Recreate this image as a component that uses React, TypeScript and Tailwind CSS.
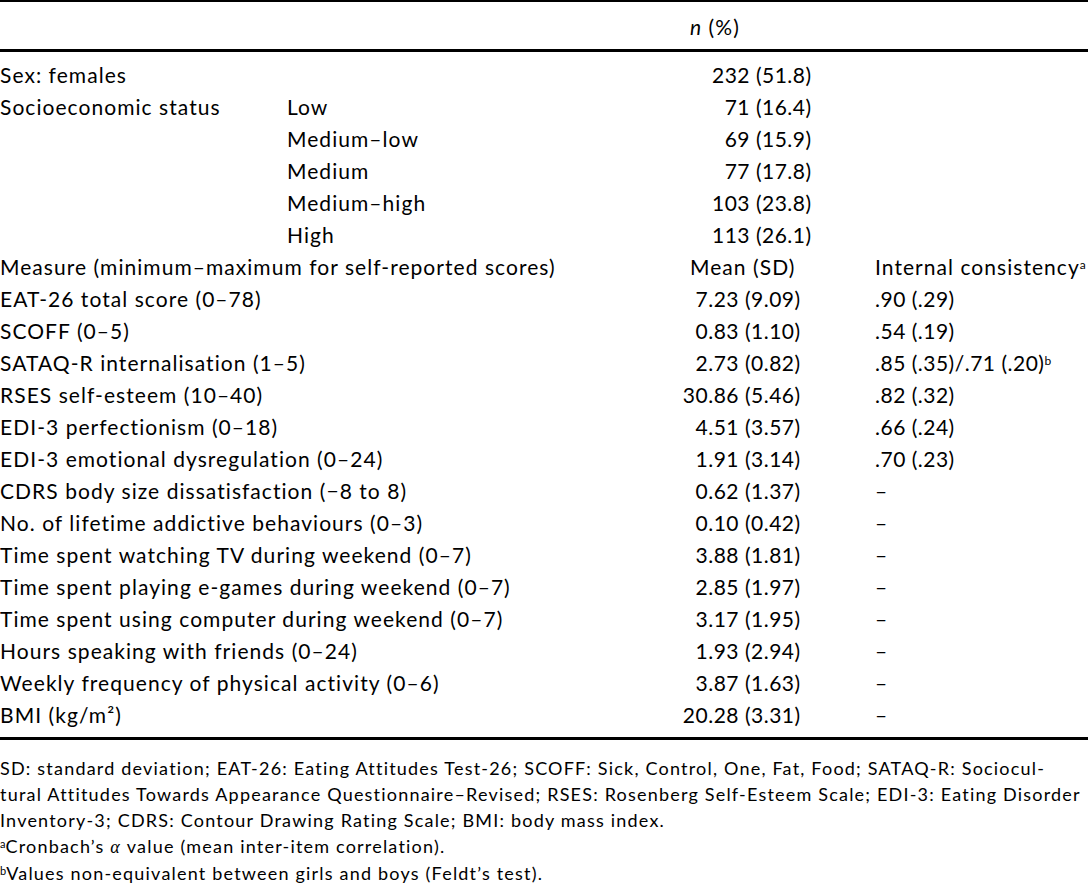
import React from "react";

type Row = {
  label?: string;
  sub?: string;
  num: string;
  paren: string;
  ic?: React.ReactNode;
};

const groupRows: Row[] = [
  { label: "Sex: females", num: "232", paren: "(51.8)" },
  { label: "Socioeconomic status", sub: "Low", num: "71", paren: "(16.4)" },
  { sub: "Medium–low", num: "69", paren: "(15.9)" },
  { sub: "Medium", num: "77", paren: "(17.8)" },
  { sub: "Medium–high", num: "103", paren: "(23.8)" },
  { sub: "High", num: "113", paren: "(26.1)" },
];

const measureRows: Row[] = [
  { label: "EAT-26 total score (0–78)", num: "7.23", paren: "(9.09)", ic: ".90 (.29)" },
  { label: "SCOFF (0–5)", num: "0.83", paren: "(1.10)", ic: ".54 (.19)" },
  {
    label: "SATAQ-R internalisation (1–5)",
    num: "2.73",
    paren: "(0.82)",
    ic: (
      <>
        .85 (.35)/.71 (.20)
        <sup className="text-[12px] tracking-normal">b</sup>
      </>
    ),
  },
  { label: "RSES self-esteem (10–40)", num: "30.86", paren: "(5.46)", ic: ".82 (.32)" },
  { label: "EDI-3 perfectionism (0–18)", num: "4.51", paren: "(3.57)", ic: ".66 (.24)" },
  { label: "EDI-3 emotional dysregulation (0–24)", num: "1.91", paren: "(3.14)", ic: ".70 (.23)" },
  { label: "CDRS body size dissatisfaction (−8 to 8)", num: "0.62", paren: "(1.37)", ic: "–" },
  { label: "No. of lifetime addictive behaviours (0–3)", num: "0.10", paren: "(0.42)", ic: "–" },
  { label: "Time spent watching TV during weekend (0–7)", num: "3.88", paren: "(1.81)", ic: "–" },
  { label: "Time spent playing e-games during weekend (0–7)", num: "2.85", paren: "(1.97)", ic: "–" },
  { label: "Time spent using computer during weekend (0–7)", num: "3.17", paren: "(1.95)", ic: "–" },
  { label: "Hours speaking with friends (0–24)", num: "1.93", paren: "(2.94)", ic: "–" },
  { label: "Weekly frequency of physical activity (0–6)", num: "3.87", paren: "(1.63)", ic: "–" },
  {
    label: "BMI (kg/m²)",
    num: "20.28",
    paren: "(3.31)",
    ic: "–",
  },
];

function TableRow({ row, numWidth }: { row: Row; numWidth: string }) {
  return (
    <div className="grid grid-cols-[287px_403px_185px_1fr] h-[32px] leading-[32px] whitespace-nowrap">
      {row.sub !== undefined ? (
        <>
          <div>{row.label}</div>
          <div>{row.sub}</div>
        </>
      ) : (
        <div className="col-span-2">{row.label}</div>
      )}
      {/* values line up on the opening bracket */}
      <div className="flex whitespace-pre tracking-[0.5px]">
        <span className={`${numWidth} shrink-0 flex justify-end`}>
          <span>{row.num}</span>
        </span>
        <span> {row.paren}</span>
      </div>
      <div className="tracking-[0.5px]">{row.ic}</div>
    </div>
  );
}

export default function App() {
  return (
    <div className="w-[1088px] h-[886px] bg-white text-black font-[family-name:Lato,sans-serif] text-[21px] tracking-[1.05px] overflow-hidden">
      <div className="h-[2px] bg-black" />

      {/* column header */}
      <div className="grid grid-cols-[690px_1fr] pt-[9px] pb-[6px] h-[47px] leading-[32px]">
        <div />
        <div>
          <i>n</i> (%)
        </div>
      </div>
      <div className="h-[3px] bg-black" />

      <div className="pt-[7px]">
        {groupRows.map((r, i) => (
          <TableRow key={i} row={r} numWidth="w-[60px]" />
        ))}

        <div className="grid grid-cols-[690px_185px_1fr] h-[32px] leading-[32px] whitespace-nowrap">
          <div>Measure (minimum–maximum for self-reported scores)</div>
          <div>Mean (SD)</div>
          <div>
            Internal consistency<sup className="text-[12px] tracking-normal">a</sup>
          </div>
        </div>

        {measureRows.map((r, i) => (
          <TableRow key={i} row={r} numWidth="w-[49px]" />
        ))}
      </div>

      <div className="mt-[6px] h-[3px] bg-black" />

      {/* notes */}
      <div className="mt-[15px] text-[18px] tracking-[1.2px] leading-[26px] whitespace-nowrap">
        <div>
          SD: standard deviation; EAT-26: Eating Attitudes Test-26; SCOFF: Sick, Control, One, Fat, Food; SATAQ-R: Sociocul-
        </div>
        <div>
          tural Attitudes Towards Appearance Questionnaire–Revised; RSES: Rosenberg Self-Esteem Scale; EDI-3: Eating Disorder
        </div>
        <div>Inventory-3; CDRS: Contour Drawing Rating Scale; BMI: body mass index.</div>
        <div>
          <sup className="text-[11px] tracking-normal">a</sup>Cronbach’s{" "}
          <i className="font-[family-name:'Liberation_Serif',serif]">α</i> value (mean inter-item correlation).
        </div>
        <div>
          <sup className="text-[11px] tracking-normal">b</sup>Values non-equivalent between girls and boys (Feldt’s test).
        </div>
      </div>
    </div>
  );
}
